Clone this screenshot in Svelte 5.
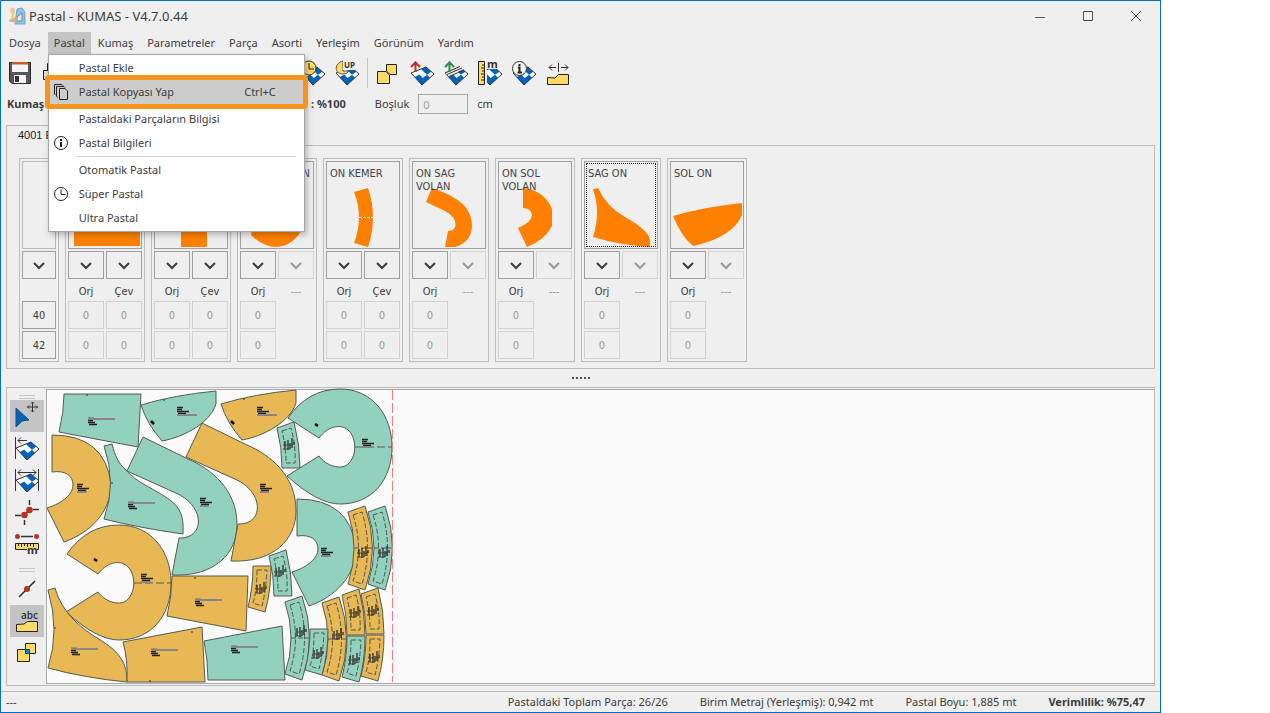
<script>
  const menus = ['Dosya', 'Pastal', 'Kumaş', 'Parametreler', 'Parça', 'Asorti', 'Yerleşim', 'Görünüm', 'Yardım'];

  const entries = [
    { label: 'Pastal Ekle' },
    { label: 'Pastal Kopyası Yap', keys: 'Ctrl+C', icon: 'copy', marked: true },
    { label: 'Pastaldaki Parçaların Bilgisi' },
    { label: 'Pastal Bilgileri', icon: 'info', ruled: true },
    { label: 'Otomatik Pastal' },
    { label: 'Süper Pastal', icon: 'clock' },
    { label: 'Ultra Pastal' }
  ];

  const tools = ['clockFabric', 'upFabric', '|', 'parts', 'redFabric', 'greenFabric', 'rulerFabric', 'infoFabric', 'spread'];
  const sideTools = ['select', 'alignLeft', 'alignBoth', 'snap', 'measure', '|', 'point', 'label', 'overlap'];

  const sizes = ['40', '42'];

  const parts = [
    { name: '', pair: true, d: 'M5 26H71V84H5Z' },
    { name: '', pair: true, d: 'M26 26H52V85H26Z' },
    { name: 'N', side: true, d: 'M10 73Q22 85 36 85Q52 84 62 66L55 50H15Z' },
    { name: 'ON KEMER', pair: true, d: 'M27 30L41 26Q51 55 41 85L27 81Q37 55 27 30Z', fold: true },
    { name: 'ON SAG VOLAN', d: 'M19 26L13 40L32 49Q43 55 42.500 63Q42 69 35 69L32 85H42Q59 80 59 63Q58 46 43 37Q32 30 19 26Z' },
    { name: 'ON SOL VOLAN', d: 'M24 26Q45 28 53 47V64Q46 78 28 85L19 66Q33 60 33 53Q32 46 24 46Z' },
    { name: 'SAG ON', focus: true, d: 'M8 27L13 26Q22 45 40 55Q65 69 65 79V85Q34 83 8 75Q16 50 8 27Z' },
    { name: 'SOL ON', d: 'M2 54Q32 45 71 41V53C64 70 42 80 22 84Q10 74 2 54Z' }
  ];

  const teal = '#92d1bd';
  const gold = '#e7b854';

  const LONG = 'M0 6L17 0Q32 42 17 84L0 78Q12 42 0 6Z';
  const UPPER = 'M0 6L17 0Q23 23 23 46H5Q5 25 0 6Z';
  const LOWER = 'M5 0H23Q23 25 17 46L0 41Q5 22 5 0Z';
  const RING = 'M288 418Q308 389 340 389C372 389 392 415 392 447C392 480 372 504 340 504Q318 504 287 476L319 456C328 468 341 468 345 466C358 460 358 434 345 428C339 425 328 426 319 438Z';
  const HOOK = 'M143 437L127 471L178 494C206 508 204 539 179 538L172 575C215 577 237 553 237 525C237 489 211 469 188 459Z';
  const ARC = 'M52 435Q105 435 111 484C111 512 90 533 64 542L47 508C63 503 73 494 73 485C73 476 66 470 52 472Z';
  const WEDGE = 'M141 405Q174 395 216 391V404C210 423 184 437 162 441Q147 424 141 405Z';

  const pieces = [
    [teal, 'M64 394H141L138 447L59 432Q64 412 64 394Z'],
    [teal, WEDGE],
    [gold, WEDGE, 80, -1],
    [gold, ARC],
    [teal, 'M104 446L112 444C115 456 119 464 125 469C131 476 138 481 145 485C156 491 163 495 170 500C180 508 184 515 183 534Q140 528 104 519Q117 483 104 446Z'],
    [teal, HOOK],
    [gold, HOOK, 59, -14],
    [teal, RING],
    [gold, RING, -221, 136],
    [gold, 'M48 590L55 588C62 612 78 626 97 638C121 652 127 664 127 682Q85 678 48 668Q60 630 48 590Z'],
    [gold, 'M172 576H248L246 631L167 616Q172 596 172 576Z'],
    [gold, 'M123 642L202 627L205 682H127Q128 660 123 642Z'],
    [teal, 'M204 641L282 626L285 680H208Q208 660 204 641Z'],
    [teal, ARC, 245, 64],
    [gold, LONG, 348, 506],
    [teal, LONG, 368, 506],
    [teal, LONG, 285, 596],
    [gold, LONG, 322, 597],
    [teal, UPPER, 277, 422],
    [teal, UPPER, 269, 550],
    [gold, UPPER, 342, 589],
    [gold, UPPER, 361, 588],
    [gold, LOWER, 248, 566],
    [teal, LOWER, 305, 629],
    [teal, LOWER, 342, 636],
    [gold, LOWER, 361, 635]
  ];

  // Dashed seam lines inside the narrow pieces
  const seams = { [LONG]: 'M5 9L14 6Q25 42 14 78L5 75Q16 42 5 9Z M6 42H24', [UPPER]: 'M5 9L14 6Q19 24 18 41H9Q9 25 5 9Z', [LOWER]: 'M9 4H19Q18 25 14 40L5 37Q9 25 9 4Z' };

  // Piece captions: x, y, underline start, underline width
  const notes = [
    [88, 419, 0, 27], [177, 408, 0, 20], [257, 408, 0, 20], [77, 485, 0, 10], [128, 503, 0, 27],
    [200, 499, 0, 9], [260, 485, 0, 9], [362, 440, 0, 10], [141, 575, 0, 10], [71, 649, 0, 27],
    [195, 600, 0, 27], [151, 650, 0, 27], [231, 647, 0, 27], [321, 549, 0, 10], [284, 441, 0, 5],
    [275, 568, 0, 5], [256, 585, 0, 5], [296, 628, 0, 5], [313, 650, 0, 5], [333, 631, 0, 5],
    [350, 609, 0, 5], [368, 607, 0, 5], [349, 656, 0, 5], [369, 654, 0, 5], [358, 549, 0, 5], [379, 549, 0, 5]
  ];
</script>

{#snippet fabric()}
  <path d="M1 12L16 6L24 13L12 24Z" fill="#fff" />
  <path d="M11 8L16 6L21.300 10.700L17 13.800L14 11ZM4.700 16L9.300 13.400L12.700 17L8.300 20ZM12.700 17L17 13.800L20 16.700L12 24L8.300 20Z" fill="#0063be" />
  <path d="M1 12L16 6L24 13L12 24Z" fill="none" stroke="#333" />
{/snippet}

{#snippet icon(name)}
  <svg class="icon" viewBox="0 0 24 24" aria-hidden="true">
    {#if name === 'save'}
      <path d="M1.500 1.500H22.500V22.500H4L1.500 20Z" fill="#55565a" stroke="#2b2b2b" />
      <path d="M4 3H20V11H4Z" fill="#f4f4f4" /><path d="M4 1H20V3.500H4Z" fill="#d35a1e" />
      <path d="M6 14H18V22H6Z" fill="#f4f4f4" /><path d="M7 15H11V21H7Z" fill="#333" />
    {:else if name === 'print'}
      <path d="M1.500 9.500H22.500V18.500H1.500ZM5.500 9V2.500H18V9" fill="#ddd" stroke="#222" />
    {:else if name === 'clockFabric'}
      {@render fabric()}
      <circle cx="8" cy="7" r="7" fill="#ffd966" stroke="#333" /><path d="M8 2V8H13" fill="none" stroke="#222" />
    {:else if name === 'upFabric'}
      {@render fabric()}
      <path d="M8 0C-1 2 -1 13 8 13Q12 13 14 10H8Z" fill="#ffd966" stroke="#555" />
      <path d="M8 -1H24V9H8Z" fill="#efefef" />
      <text x="9" y="7" class="glyph">UP</text>
    {:else if name === 'parts'}
      <path d="M10.500 3.500H20.500V13.500H14L10.500 10ZM1.500 10.500H10L13.500 14V22.500H1.500Z" fill="#ffd966" stroke="#222" />
    {:else if name === 'redFabric'}
      {@render fabric()}<path d="M5.500 11V2M1 6L5.500 1.500L10 6" fill="none" stroke="#b83222" stroke-width="2" />
    {:else if name === 'greenFabric'}
      {@render fabric()}
      <path d="M1 12L16 5L20 8L5 15Z" fill="#efefef" /><path d="M1 12L16 5.500M3 13.500L18 7M5 15.500L20 9" stroke="#333" />
      <path d="M5.500 11V2M1 6L5.500 1.500L10 6" fill="none" stroke="#2b8a3e" stroke-width="2" />
    {:else if name === 'rulerFabric'}
      {@render fabric()}
      <path d="M0 0H9V24H0Z" fill="#efefef" /><path d="M.5 .5H6.500V23.500H.5Z" fill="#ffd966" stroke="#222" />
      <path d="M4 4H6M3 7H6M4 10H6M3 13H6M4 16H6M3 19H6" stroke="#222" />
      <path d="M8 0H24V8H8Z" fill="#efefef" /><text x="9" y="7" class="glyph big">m</text>
    {:else if name === 'infoFabric'}
      {@render fabric()}
      <circle cx="7.500" cy="7.500" r="7" fill="#f6f6f6" stroke="#333" /><path d="M7.500 3V5M6 6.500H7.500V11M5.500 11.500H10" fill="none" stroke="#222" stroke-width="2" />
    {:else if name === 'spread'}
      <path d="M1.500 23.500V16.500L9 17L12.500 13.500H22.500V23.500Z" fill="#ffd966" stroke="#222" />
      <path d="M12.500 2V11M3 6.500H10M6 3.500L3 6.500L6 9.500M15 6.500H22M19 3.500L22 6.500L19 9.500" fill="none" stroke="#333" />
    {:else if name === 'select'}
      <path d="M1 4V23L7 17L14 16Z" fill="#0063be" stroke="#1d4d80" />
      <path d="M17.500 -2V8M12.500 3H22.500M16 -.5L17.500 -2L19 -.5M16 6.500L17.500 8L19 6.500M14 1.500L12.500 3L14 4.500M21 1.500L22.500 3L21 4.500" fill="none" stroke="#333" />
    {:else if name === 'alignLeft'}
      {@render fabric()}<path d="M.5 1V23M3 4.500H12M6 1.500L3 4.500L6 7.500" fill="none" stroke="#333" />
    {:else if name === 'alignBoth'}
      {@render fabric()}<path d="M.5 1V23M23.500 1V23M3 4.500H21M6 1.500L3 4.500L6 7.500M18 1.500L21 4.500L18 7.500" fill="none" stroke="#333" />
    {:else if name === 'snap'}
      <path d="M0 15.500H6M9.500 20V25M14.500 0V5M18 9.500H24M9 15L15 9" stroke="#333" stroke-width="1.500" />
      <circle cx="9.500" cy="15" r="3.300" fill="#b83222" /><circle cx="14.500" cy="10" r="3.300" fill="#b83222" />
    {:else if name === 'measure'}
      <path d="M6 4.500H18" stroke="#333" stroke-width="1.500" /><circle cx="2.500" cy="4.500" r="2.500" fill="#b83222" /><circle cx="21.500" cy="4.500" r="2.500" fill="#b83222" />
      <path d="M.5 11.500H23.500V17.500H.5Z" fill="#ffd966" stroke="#222" /><path d="M3.500 14V11M6.500 15V11M9.500 14V11M12.500 15V11M15.500 14V11M18.500 15V11" stroke="#222" />
      <path d="M12 16H22V22H12Z" fill="#efefef" /><text x="12" y="22" class="glyph big">m</text>
    {:else if name === 'point'}
      <path d="M4 20L20 4" stroke="#222" stroke-width="1.500" /><circle cx="12" cy="12" r="3" fill="#b83222" />
    {:else if name === 'label'}
      <path d="M1.500 22.500V15.500L9 15L12.500 12.500H22.500V22.500Z" fill="#ffd966" stroke="#222" />
      <text x="6" y="10" class="glyph abc">abc</text>
    {:else if name === 'overlap'}
      <path d="M10.500 2.500H20.500V12.500H10.500ZM2.500 8.500H14.500V20.500H2.500Z" fill="#ffd966" stroke="#222" /><path d="M10.500 8.500H14.500V12.500H10.500Z" fill="#0084dc" stroke="#004c8c" />
    {/if}
  </svg>
{/snippet}

{#snippet chevron()}
  <svg class="chev" viewBox="0 0 10 7" aria-hidden="true"><path d="M0 1L5 6L10 1" fill="none" stroke="currentColor" stroke-width="2" /></svg>
{/snippet}

<div class="window">
  <header class="title">
    <svg class="logo" viewBox="0 0 16 16" aria-hidden="true">
      <path d="M8 1L13 0L16 4V16H6Z" fill="#8fc4e6" stroke="#6aa9d2" /><path d="M8 9L13 5V13H8Z" fill="#e8e8e8" stroke="#6d8796" />
      <path d="M2 0H5Q7 3 5 7L6 11H2L3 7Q0 3 2 0Z" fill="#efc98a" /><path d="M0 12L9 9L7 14H1Z" fill="#d9ae85" />
    </svg>
    <h1>Pastal - KUMAS - V4.7.0.44</h1>
    <div class="controls">
      <button aria-label="Simge durumuna küçült"><svg viewBox="0 0 10 10"><path d="M0 6.500H10" /></svg></button>
      <button aria-label="Ekranı kapla"><svg viewBox="0 0 10 10"><path d="M.5 .5H9.500V9.500H.5Z" /></svg></button>
      <button aria-label="Kapat"><svg viewBox="0 0 10 10"><path d="M0 0L10 10M10 0L0 10" /></svg></button>
    </div>
  </header>

  <nav class="menubar">
    {#each menus as menu}
      <div class="menu">
        <button class:open={menu === 'Pastal'}>{menu}</button>
        {#if menu === 'Pastal'}
          <ul class="dropdown">
            {#each entries as entry}
              <li class:marked={entry.marked} class:ruled={entry.ruled}>
                <button>
                  <svg class="mini" viewBox="0 0 16 16" aria-hidden="true">
                    {#if entry.icon === 'copy'}
                      <path d="M6.500 4.500H12L14.500 7V15.500H6.500ZM4.500 13.500L3.500 12V2.500H11L12 3.500M2.500 11L1.500 10V.5H9L10 1.500" />
                    {:else if entry.icon === 'info'}
                      <circle cx="8" cy="8" r="6.500" /><path d="M8 4V6M8 7V12" stroke-width="2" />
                    {:else if entry.icon === 'clock'}
                      <circle cx="8" cy="8" r="6.500" /><path d="M8 3.500V8.500H12.500" />
                    {/if}
                  </svg>
                  <span>{entry.label}</span>
                  {#if entry.keys}<kbd>{entry.keys}</kbd>{/if}
                </button>
              </li>
            {/each}
          </ul>
        {/if}
      </div>
    {/each}
  </nav>

  <div class="toolbar">
    <button aria-label="Kaydet">{@render icon('save')}</button>
    <button class="spaced" aria-label="Yazdır">{@render icon('print')}</button>
    {#each tools as tool}
      {#if tool === '|'}<i class="divider"></i>{:else}<button aria-label={tool}>{@render icon(tool)}</button>{/if}
    {/each}
  </div>

  <div class="settings">
    <b class="fabric-name">Kumaş</b>
    <b class="ratio">: %100</b>
    <label for="gap">Boşluk</label>
    <input id="gap" value="0" disabled />
    <span>cm</span>
  </div>

  <div class="tabs"><button>4001 E</button></div>
  <section class="sheet">
    <div class="card narrow">
      <div class="preview blank"></div>
      <button class="cell" aria-label="Tümünü seç">{@render chevron()}</button>
      <div class="heads"></div>
      {#each sizes as size}<button class="cell">{size}</button>{/each}
    </div>
    {#each parts as part}
      <div class="card">
        <button class="preview" class:focus={part.focus} class:clipped={part.side} aria-label={part.name || 'Parça'}>
          <svg viewBox="0 0 72 86" aria-hidden="true">
            <path d={part.d} fill="#ff8000" />
            {#if part.fold}<path d="M32 55.500H46" stroke="#fff" stroke-dasharray="3 1" />{/if}
          </svg>
          <span>{part.name}</span>
        </button>
        <div class="pair">
          <button class="cell" aria-label="Orj seç">{@render chevron()}</button>
          <button class="cell" aria-label="Çev seç" disabled={!part.pair}>{@render chevron()}</button>
        </div>
        <div class="pair heads">
          <span>Orj</span>
          <span class:dim={!part.pair}>{part.pair ? 'Çev' : '---'}</span>
        </div>
        {#each sizes as size}
          <div class="pair">
            <button class="cell" disabled>0</button>
            {#if part.pair}<button class="cell" disabled>0</button>{/if}
          </div>
        {/each}
      </div>
    {/each}
  </section>

  <div class="splitter"><i></i><i></i><i></i><i></i><i></i></div>

  <main class="work">
    <div class="side">
      <i class="grip"></i>
      {#each sideTools as tool}
        {#if tool === '|'}<i class="grip second"></i>{:else}
          <button aria-label={tool} class:on={tool === 'select' || tool === 'label'}>{@render icon(tool)}</button>
        {/if}
      {/each}
    </div>
    <div class="canvas">
      <svg class="marker" viewBox="47 390 350 291" aria-hidden="true">
        {#each pieces as [fill, d, x = 0, y = 0]}
          <g transform="translate({x} {y})">
            <path {d} {fill} stroke="#555b50" />
            {#if seams[d]}<path d={seams[d]} fill="none" stroke="#4b5a50" stroke-dasharray="5 2" />{/if}
          </g>
        {/each}
        <path d="M355 447H392M134 583H171" stroke="#555b50" stroke-dasharray="8 3" />
        <path d="M87 394V396M164 399V401M244 398V400M111 483H113M54 628H56M150 682V680M192 633V631M195 577V579" stroke="#333" />
        {#each notes as [x, y, u, w]}
          <g transform="translate({x} {y})">
            {#if w === 5}
              <path d="M1 0V8M4 -1V9M6 2V8M8 -3V7M10 1V4" stroke="#222" stroke-width="1.200" />
              <path d="M-1 4H9M-1 8H6" stroke="#444" />
            {:else}
              <path d="M0 -.5H6M0 1.500H5M0 3.500H{w === 27 ? 7 : 12}M1 5.500H9" stroke="#222" stroke-width="1.500" />
              <path d="M{u} {w === 27 ? 0 : 7}h{w}" stroke="#85858a" stroke-width="2" />
            {/if}
          </g>
        {/each}
        <path d="M151 421L154 424M231 421L234 424M315 424L318 426M94 559L97 561" stroke="#000" stroke-width="2.500" />
        <path d="M392.500 390V682" stroke="#ff7b7b" stroke-dasharray="10 3" />
      </svg>
    </div>
  </main>

  <footer class="status">
    <span class="grow">---</span>
    <span>Pastaldaki Toplam Parça: 26/26</span>
    <span>Birim Metraj (Yerleşmiş): 0,942 mt</span>
    <span>Pastal Boyu: 1,885 mt</span>
    <b>Verimlilik: %75,47</b>
  </footer>
</div>

<style>
  :global(body) { margin: 0; background: #fff; }
  .window {
    box-sizing: border-box;
    margin-right: 109px;
    min-height: 100vh;
    display: flex;
    flex-direction: column;
    border: 1px solid #0070c5;
    background: #efefef;
    color: #3c3c3c;
    font: 11px/16px "Noto Sans", "Open Sans", sans-serif;
  }
  button { font: inherit; color: inherit; background: none; border: 0; padding: 0; margin: 0; }
  svg { display: block; overflow: visible; }

  .title { height: 31px; box-sizing: border-box; display: flex; align-items: center; padding: 0 0 2px 8px; gap: 4px; }
  .logo { width: 16px; height: 16px; }
  h1 { margin: 0; font-size: 13px; line-height: 18px; font-weight: 400; }
  .controls { margin-left: auto; display: flex; }
  .controls button { width: 48px; height: 28px; display: grid; place-items: center; }
  .controls svg { width: 10px; height: 10px; fill: none; stroke: #555; }

  .menubar { display: flex; height: 22px; padding-left: 1px; }
  .menu { position: relative; }
  .menu > button { height: 22px; padding: 0 7px; }
  .menu > .open { background: #c4c4c4; padding: 0 6px; }
  .dropdown {
    position: absolute; z-index: 2; top: 22px; left: 0;
    box-sizing: border-box; width: 257px; margin: 0; padding: 1px 0; list-style: none;
    background: #fff; border: 1px solid #a6a6a6; box-shadow: 2px 3px 6px rgba(0, 0, 0, .25);
  }
  .dropdown button { width: 100%; height: 24px; padding: 0 28px 0 4px; display: flex; align-items: center; text-align: left; }
  .dropdown span { flex: 1; margin-left: 10px; }
  .dropdown kbd { font: inherit; }
  .mini { width: 16px; height: 16px; fill: none; stroke: #222; }
  .marked { position: relative; margin-bottom: 3px; background: #cdcdcd; }
  .marked::after {
    content: ""; position: absolute; inset: -5px -4px;
    border: 5px solid #f7941d; border-radius: 4px;
  }
  .ruled { padding-bottom: 3px; background: linear-gradient(#d5d5d5, #d5d5d5) 27px 25px / 220px 1px no-repeat; }

  .toolbar { display: flex; align-items: center; gap: 10px; height: 38px; padding-left: 7px; }
  .toolbar .spaced { margin-right: 225px; }
  .icon { width: 24px; height: 24px; }
  .divider { width: 1px; height: 30px; background: #c6c6c6; margin: 0 -2px; }
  .glyph { font: bold 8px "Open Sans", sans-serif; fill: #333; }
  .glyph.big { font-size: 11px; }
  .glyph.abc { font-size: 10px; font-weight: 600; }

  .settings { display: flex; align-items: center; height: 24px; padding-left: 6px; }
  .fabric-name { width: 304px; }
  .ratio { margin-right: 29px; }
  .settings input {
    box-sizing: border-box; width: 50px; height: 20px; margin: 0 9px; padding: 0 4px;
    border: 1px solid #a6a6a6; background: #efefef; color: #a0a0a0; font: inherit;
  }

  .tabs { display: flex; margin: 9px 5px 0; }
  .preview, .cell, .heads { font: 11px/13px "DejaVu Sans Condensed", sans-serif; }
  .tabs button {
    width: 110px; height: 21px; margin-bottom: -1px; padding: 0 0 2px 11px; text-align: left;
    border: 1px solid #bcbcbc; border-bottom: 0; background: #efefef; color: #222; position: relative;
    font: 11px/13px "Liberation Sans", sans-serif;
  }
  .sheet { margin: 0 5px; padding: 12px; padding-bottom: 6px; border: 1px solid #bcbcbc; display: flex; gap: 6px; }
  .card { width: 74px; padding: 2px; border: 1px solid #bcbcbc; display: flex; flex-direction: column; gap: 2px; }
  .narrow { width: 34px; }
  .preview { box-sizing: border-box; height: 88px; border: 1px solid #a0a0a0; display: grid; text-align: left; color: #444; }
  .preview > * { grid-area: 1 / 1; }
  .preview svg { width: 72px; height: 86px; }
  .preview span { align-self: start; padding: 5px 3px; }
  .clipped span { text-align: right; color: #44548c; }
  .preview.blank { border-color: #b8b8b8; }
  .focus { outline: 1px dotted #222; outline-offset: -3px; }
  .pair { display: flex; gap: 2px; }
  .cell { box-sizing: border-box; height: 28px; border: 1px solid #a0a0a0; display: grid; place-items: center; color: #3c3c3c; }
  .pair .cell, .pair span { width: 36px; }
  .cell:disabled { border-color: #d2d2d2; color: #999; }
  .chev { width: 10px; height: 7px; }
  .heads { height: 16px; padding-top: 2px; align-items: center; text-align: center; }
  .dim { color: #999; }

  .splitter { height: 18px; display: flex; gap: 2px; align-items: center; justify-content: center; }
  .splitter i { width: 2px; height: 2px; background: #555; }

  .work { flex: 1; margin: 0 5px 5px; border: 1px solid #bcbcbc; display: flex; }
  .side { display: flex; flex-direction: column; align-items: center; padding: 7px 2px 0 3px; }
  .side > button { width: 34px; height: 32px; display: grid; place-items: center; }
  .side .on { background: #c4c4c4; }
  .grip { width: 16px; height: 2px; margin-bottom: 1px; border: solid #c6c6c6; border-width: 1px 0; }
  .second { margin: 8px 0 1px; }
  .canvas { flex: 1; margin: 1px 0; border: 1px solid #aaa; border-width: 1px 0 1px 1px; background: #fafafa; }
  .marker { width: 350px; height: 291px; }

  .status { height: 20px; display: flex; align-items: center; gap: 32px; padding: 0 15px 0 5px; border-top: 1px solid #bcbcbc; }
  .grow { flex: 1; }
</style>
